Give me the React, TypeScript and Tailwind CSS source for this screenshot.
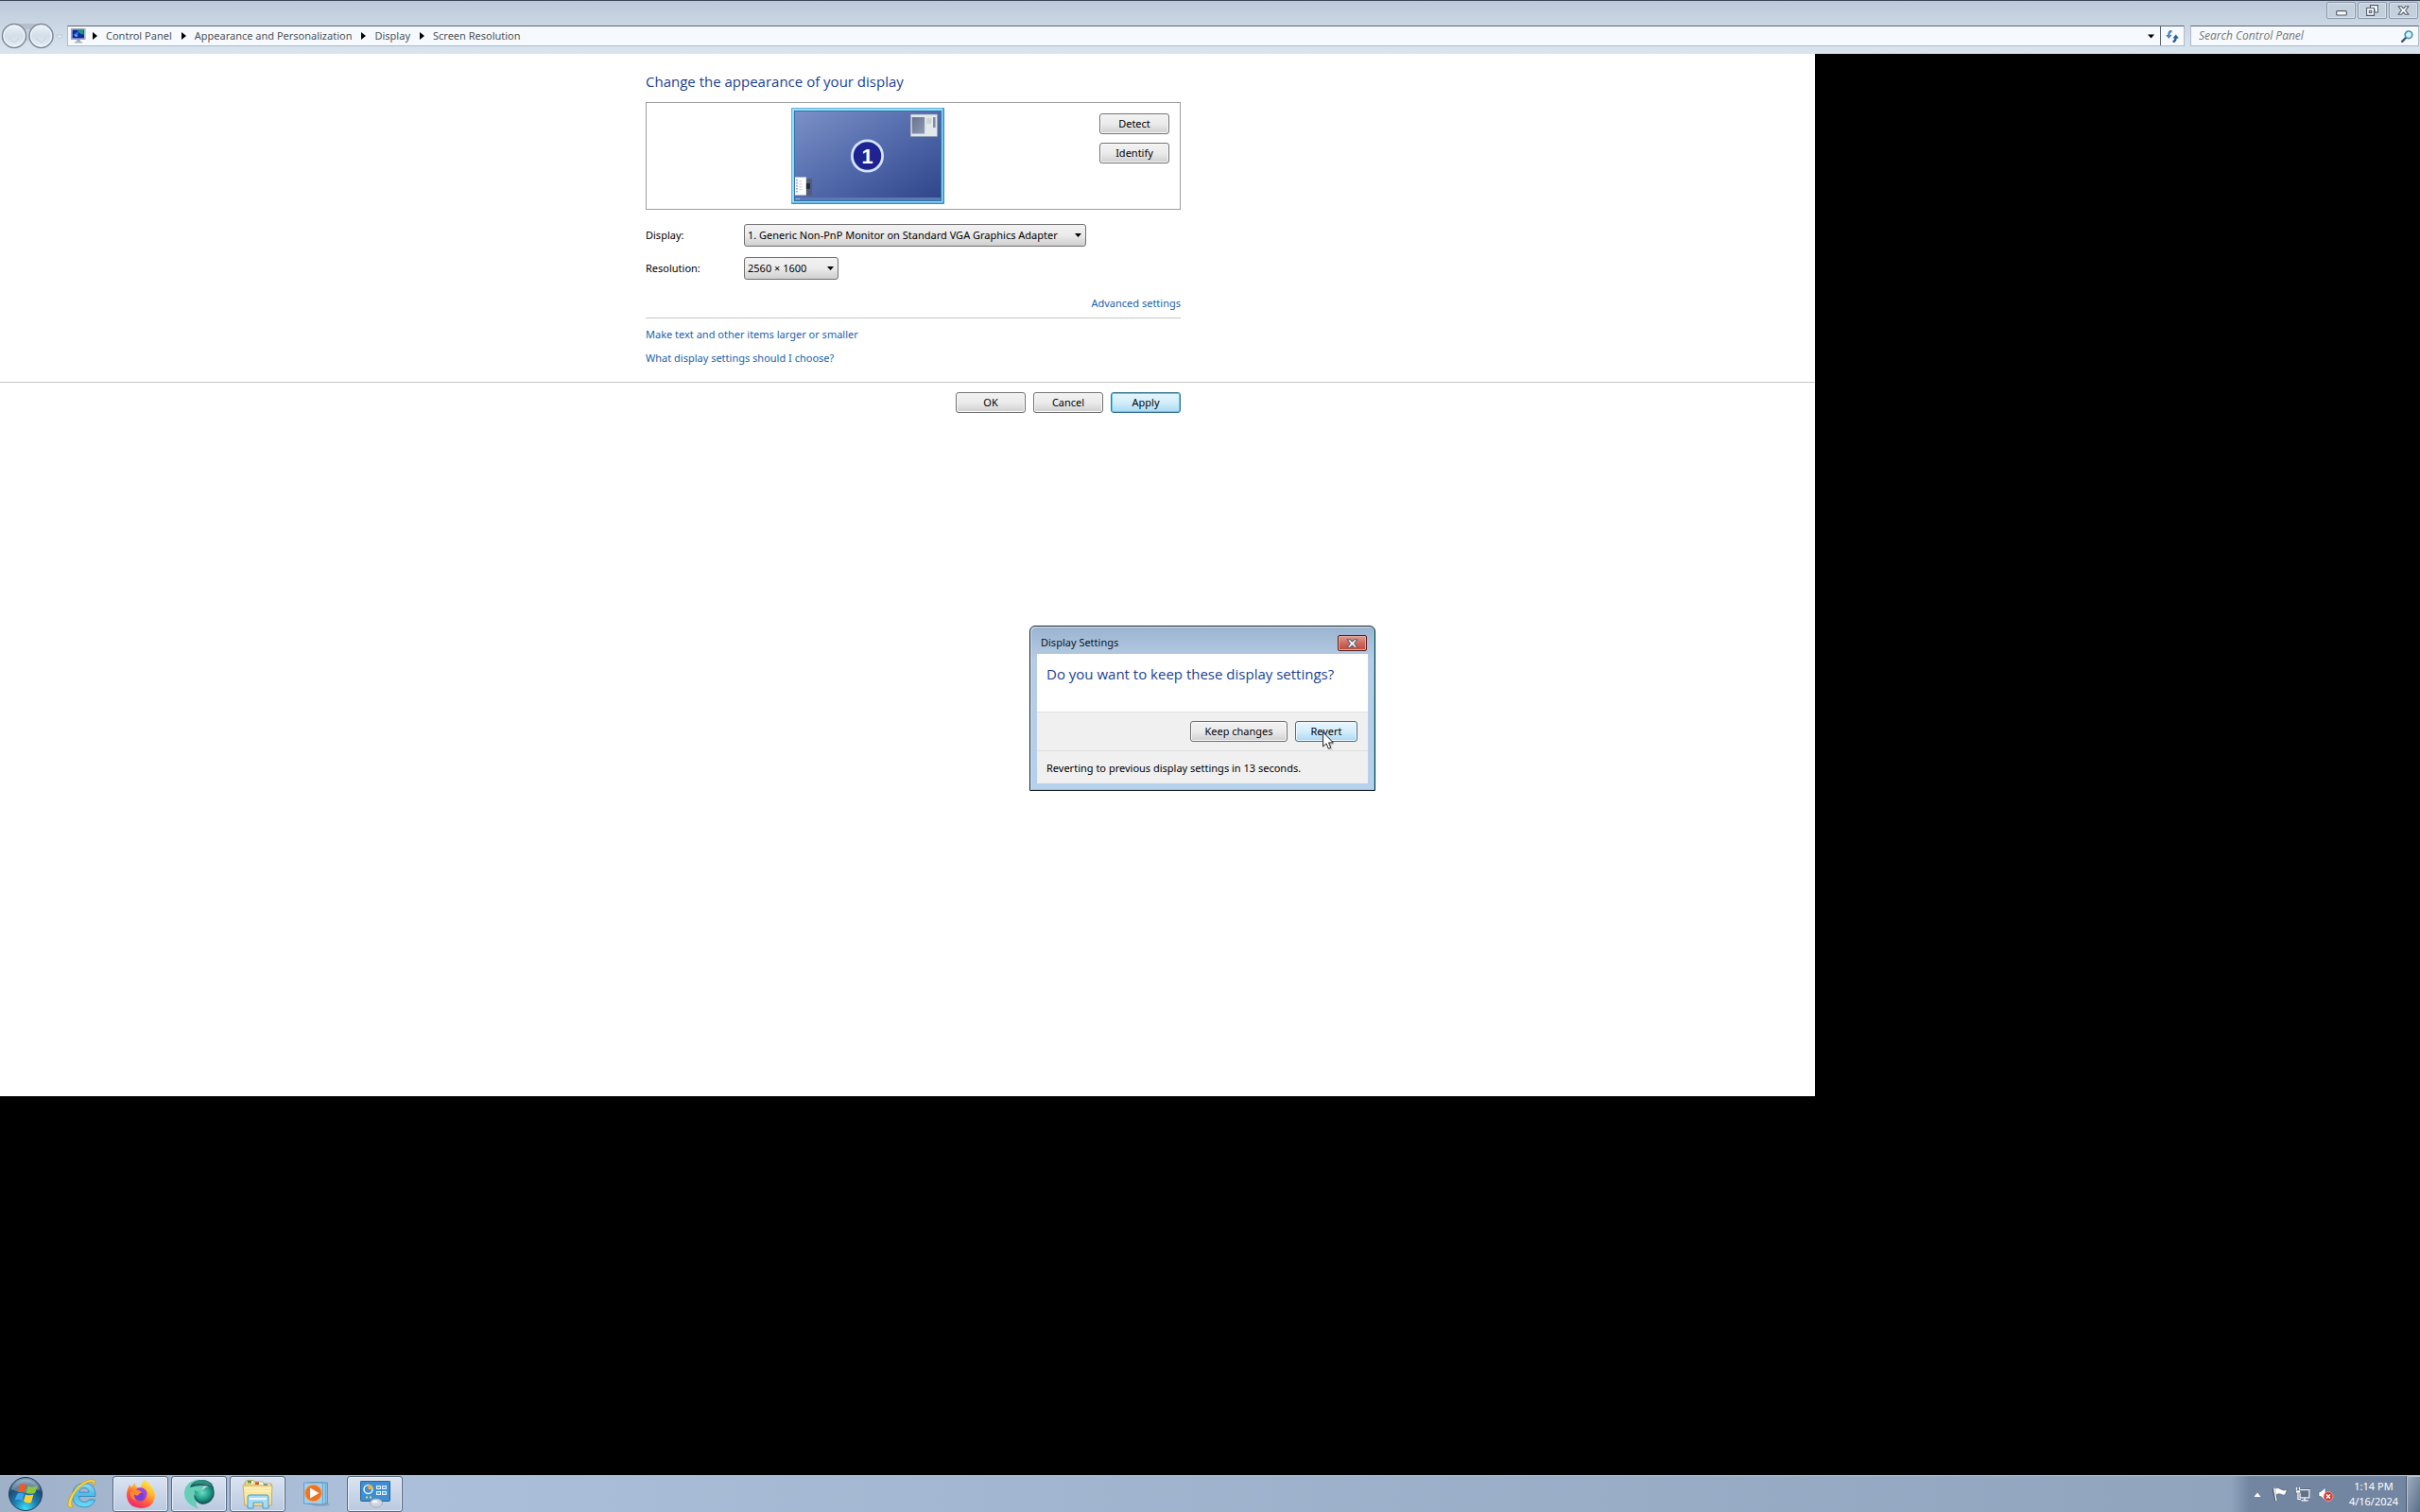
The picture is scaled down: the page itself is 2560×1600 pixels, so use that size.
import React from "react";

const buttonBase =
  "h-[22px] rounded-[3px] border text-[11px] leading-4 text-black shadow-[inset_0_0_0_1px_#fafafa]";
const buttonGrey =
  "border-[#707070] bg-linear-to-b from-[#f2f2f2] from-0% via-[#ebebeb] via-50% to-[#cfcfcf]";

function NavCircles() {
  return (
    <svg width="66" height="30" viewBox="0 0 66 30" aria-hidden="true">
      <defs>
        <linearGradient id="nav" x1="0" y1="0" x2="0" y2="1">
          <stop offset="0" stopColor="#eef3f8" />
          <stop offset="0.5" stopColor="#d3dee9" />
          <stop offset="1" stopColor="#e6eff7" />
        </linearGradient>
      </defs>
      <path d="M14 2 H43 L36 9 H22 Z" fill="#b3bfcc" />
      <path d="M24 22 Q29 18 34 22 L34 8 H24 Z" fill="#c3cfdb" />
      <circle cx="15" cy="15" r="12.5" fill="url(#nav)" stroke="#7b8794" strokeWidth="1.4" />
      <circle cx="15" cy="15" r="11" fill="none" stroke="#f6fafd" />
      <circle cx="43.500" cy="15" r="12.500" fill="url(#nav)" stroke="#7b8794" strokeWidth="1.4" />
      <circle cx="43.500" cy="15" r="11" fill="none" stroke="#f6fafd" />
      <path d="M9 17 l6 5 5 -4" fill="none" stroke="#c3ced9" />
      <path d="M38 18 l6 4 5 -5" fill="none" stroke="#c3ced9" />
      <path d="M60 14 h6 l-3 4 z" fill="#f2f7fb" stroke="#b2bfcc" strokeWidth="0.8" />
    </svg>
  );
}

function MonitorIcon() {
  return (
    <svg width="16" height="16" viewBox="0 0 16 16" aria-hidden="true">
      <rect x="0.500" y="0.500" width="14.500" height="11" fill="#c9d3dc" stroke="#9aa6b2" />
      <rect x="1.500" y="1.500" width="12.500" height="9" fill="#12259e" />
      <path d="M7 2 H13.500 V7 L9 5 Z" fill="#159a7a" />
      <path d="M2.500 7 L8 3 L7 9 Z" fill="#2b79e8" />
      <path d="M4 6 l3 2 l-2 1 z" fill="#7ee0ff" />
      <path d="M6 12 h4 v2 h2 v1.500 H4 V14 h2 z" fill="#a8b1ba" />
    </svg>
  );
}

function Crumb({ label }: { label: string }) {
  return (
    <li className="flex items-center gap-[9px]">
      <svg width="5" height="8" viewBox="0 0 5 8" aria-hidden="true">
        <path d="M0 0 L5 4 L0 8 Z" fill="#000" />
      </svg>
      <a href="#" className="text-[11px] leading-4 text-[#4d5258]">
        {label}
      </a>
    </li>
  );
}

function WindowControls() {
  const cls =
    "flex h-[18px] w-[31px] items-center justify-center rounded-[2px] border border-[#8b97a6] bg-[#c5d0dd] shadow-[inset_0_0_0_1px_#d9e2ec]";
  return (
    <div className="flex gap-[2px] pr-[2px]">
      <button className={cls} aria-label="Minimize">
        <svg width="12" height="14" viewBox="0 0 12 14">
          <rect x="0.700" y="7.700" width="10.600" height="4.300" rx="1" fill="#fff" stroke="#545d6e" strokeWidth="1.200" />
        </svg>
      </button>
      <button className={cls} aria-label="Restore">
        <svg width="13" height="12" viewBox="0 0 13 12">
          <path d="M4.500 0.600 H12.400 V8 H9 V5 H4.500 Z" fill="#fff" stroke="#545d6e" strokeWidth="1.100" />
          <path d="M0.600 3.500 H8.500 V11.400 H0.600 Z" fill="#fff" stroke="#545d6e" strokeWidth="1.100" />
          <rect x="3.300" y="6.200" width="2.600" height="2.400" fill="#c5d0dd" stroke="#545d6e" />
        </svg>
      </button>
      <button className={cls} aria-label="Close">
        <CloseGlyph />
      </button>
    </div>
  );
}

function CloseGlyph() {
  return (
    <svg width="13" height="10" viewBox="0 0 13 10" aria-hidden="true">
      <path
        d="M1 0.700 H4.200 L6.500 3 L8.800 0.700 H12 L8.600 5 L12 9.300 H8.800 L6.500 7 L4.200 9.300 H1 L4.400 5 Z"
        fill="#fff"
        stroke="#545d6e"
        strokeWidth="1.100"
        strokeLinejoin="round"
      />
    </svg>
  );
}

function Header() {
  return (
    <header className="flex h-[57px] flex-col border-t border-[#3c4557] bg-linear-to-b from-[#bdc9d9] via-[#ccd8e5] to-[#dae5ef]">
      <div className="flex h-[22px] items-start justify-end pt-[1px]">
        <WindowControls />
      </div>
      <div className="flex items-center">
        <div className="w-[71px] shrink-0">
          <NavCircles />
        </div>
        <div className="flex h-[22px] grow items-center border border-[#aebbc8] border-t-[#5b6673] bg-[#f6fafe]">
          <div className="flex grow items-center gap-[7px] pl-[3px]">
            <MonitorIcon />
            <ol className="flex items-center gap-[10px]">
              <Crumb label="Control Panel" />
              <Crumb label="Appearance and Personalization" />
              <Crumb label="Display" />
              <Crumb label="Screen Resolution" />
            </ol>
          </div>
          <button aria-label="Previous locations" className="flex h-full w-[20px] items-center justify-center">
            <svg width="7" height="5" viewBox="0 0 7 5">
              <path d="M0 0.500 H7 L3.500 4.500 Z" fill="#000" />
            </svg>
          </button>
          <button aria-label="Refresh" className="flex h-full w-[25px] items-center justify-center border-l border-[#5b6673]">
            <svg width="14" height="13" viewBox="0 0 14 13">
              <path d="M6.500 1 C4 1 3.300 2.500 3.300 6" fill="none" stroke="#4b86bd" strokeWidth="2.400" />
              <path d="M0 5 H6.600 L3.300 9 Z" fill="#4b86bd" />
              <path d="M7.500 12 C10 12 10.700 10.500 10.700 7" fill="none" stroke="#2d5f93" strokeWidth="2.400" />
              <path d="M7.400 8.500 H14 L10.700 4.500 Z" fill="#2d5f93" />
            </svg>
          </button>
        </div>
        <div className="mr-[1px] ml-[6px] flex h-[22px] w-[242px] items-center border border-[#aebbc8] border-t-[#5b6673] bg-[#f6fafe] pr-[5px] pl-[8px]">
          <input
            aria-label="Search Control Panel"
            placeholder="Search Control Panel"
            className="min-w-0 grow bg-transparent font-['Open_Sans'] text-[12px] leading-4 italic outline-none placeholder:text-[#757575]"
          />
          <svg width="13" height="13" viewBox="0 0 13 13" aria-hidden="true">
            <path d="M1.200 11.800 L5 8" stroke="#3f5673" strokeWidth="2.400" strokeLinecap="round" />
            <circle cx="8" cy="4.800" r="3.800" fill="#d8f3fb" stroke="#3f94b4" strokeWidth="1.700" />
          </svg>
        </div>
      </div>
    </header>
  );
}

function DisplayPreview() {
  return (
    <svg width="162" height="102" viewBox="0 0 163 102" preserveAspectRatio="none" role="img" aria-label="Monitor 1">
      <defs>
        <linearGradient id="desk" x1="0" y1="0" x2="1" y2="1">
          <stop offset="0" stopColor="#7c90c6" />
          <stop offset="0.450" stopColor="#566eae" />
          <stop offset="1" stopColor="#2e4689" />
        </linearGradient>
        <linearGradient id="mini" x1="0" y1="0" x2="1" y2="1">
          <stop offset="0" stopColor="#69728f" />
          <stop offset="1" stopColor="#8f9ab5" />
        </linearGradient>
      </defs>
      <rect width="163" height="102" rx="1" fill="#2f8cc4" />
      <rect x="0.500" y="0.500" width="161" height="100" fill="#9bdcf8" />
      <rect x="3" y="3" width="157" height="96" fill="#2776ae" />
      <rect x="4" y="4" width="155" height="94" fill="url(#desk)" />
      <rect x="4" y="95" width="155" height="3" fill="#5d78b4" />
      <rect x="127" y="7" width="28.500" height="23.500" fill="#e3e9ea" stroke="#8b96ab" strokeWidth="0.600" />
      <rect x="128.500" y="10" width="13.500" height="17.500" fill="url(#mini)" />
      <rect x="151" y="10" width="2.500" height="11" fill="#828b98" />
      <rect x="144" y="11" width="5" height="6" fill="#cbd5d4" />
      <rect x="4" y="73.500" width="12" height="19" fill="#fff" />
      <path d="M6 76 V90" stroke="#5c69c8" strokeWidth="1.200" strokeDasharray="1.500 1.500" />
      <path d="M10 77 V88" stroke="#d3d6ec" strokeWidth="3" strokeDasharray="1.500 1.500" />
      <rect x="16" y="75" width="6" height="18" fill="#545d78" />
      <rect x="16" y="80" width="4" height="6" fill="#222a40" />
      <path d="M5 96.500 H10" stroke="#c8d4ef" strokeDasharray="1.500 1" />
      <circle cx="81" cy="51" r="16.200" fill="#1d2391" stroke="#d3e4fb" strokeWidth="2.800" />
      <text x="81" y="59" textAnchor="middle" fontSize="22" fontWeight="700" fill="#fff" fontFamily="Liberation Sans, sans-serif">
        1
      </text>
    </svg>
  );
}

function Dropdown({ id, value, className }: { id: string; value: string; className: string }) {
  return (
    <div className={`relative ${className}`}>
      <select
        id={id}
        className="h-[24px] w-full appearance-none rounded-[3px] border border-[#707070] bg-linear-to-b from-[#f2f2f2] via-[#ebebeb] to-[#cfcfcf] pl-[3px] text-[11px] leading-4 text-black"
      >
        <option>{value}</option>
      </select>
      <svg className="pointer-events-none absolute top-[10px] right-[5px]" width="7" height="4" viewBox="0 0 7 4" aria-hidden="true">
        <path d="M0 0 H7 L3.500 4 Z" fill="#000" />
      </svg>
    </div>
  );
}

function Panel() {
  return (
    <section className="w-3/4 grow-[1103] basis-0 bg-white">
      <div className="ml-[683px] w-[566px] pt-[17px]">
        <h1 className="font-['Open_Sans'] text-[15px] leading-6 text-[#1c3f94]">Change the appearance of your display</h1>
        <div className="mt-[10px] flex h-[114px] items-start border border-[#9a9da0] pt-[5px]">
          <div className="ml-[153px] grow">
            <DisplayPreview />
          </div>
          <div className="mt-[6px] mr-[11px] flex flex-col gap-[9px]">
            <button className={`${buttonBase} ${buttonGrey} w-[74px]`}>Detect</button>
            <button className={`${buttonBase} ${buttonGrey} w-[74px]`}>Identify</button>
          </div>
        </div>
        <div className="mt-[15px] flex items-center text-[11px] leading-4">
          <label htmlFor="display" className="w-[104px]">
            Display:
          </label>
          <Dropdown id="display" value="1. Generic Non-PnP Monitor on Standard VGA Graphics Adapter" className="w-[362px]" />
        </div>
        <div className="mt-[11px] flex items-center text-[11px] leading-4">
          <label htmlFor="resolution" className="w-[104px]">
            Resolution:
          </label>
          <Dropdown id="resolution" value="2560 × 1600" className="w-[100px]" />
        </div>
        <div className="mt-[17px] flex h-[24px] justify-end border-b border-[#c4c6c8] text-[11px] leading-4">
          <a href="#" className="text-[#1762ad]">
            Advanced settings
          </a>
        </div>
        <div className="mt-[9px] flex flex-col items-start gap-[9px] pb-[17px] text-[11px] leading-4 text-[#1762ad]">
          <a href="#">Make text and other items larger or smaller</a>
          <a href="#">What display settings should I choose?</a>
        </div>
      </div>
      <div className="border-t border-[#c4c6c8] pt-[10px]">
        <div className="ml-[683px] flex w-[566px] justify-end gap-[8px]">
          <button className={`${buttonBase} ${buttonGrey} w-[74px]`}>OK</button>
          <button className={`${buttonBase} ${buttonGrey} w-[74px]`}>Cancel</button>
          <button className="h-[22px] w-[74px] rounded-[3px] border border-[#33718f] bg-linear-to-b from-[#e6f5fc] via-[#d3edf9] to-[#a5daf3] text-[11px] leading-4 text-black shadow-[inset_0_0_0_1px_#4fd0f5]">
            Apply
          </button>
        </div>
      </div>
    </section>
  );
}

function Dialog() {
  return (
    <div
      role="dialog"
      aria-labelledby="dialog-title"
      className="absolute top-[605px] left-[1089px] w-[366px] rounded-t-[6px] border border-[#15202c] bg-linear-to-b from-[#9ab3cf] from-0% via-[#b6cce4] via-20% to-[#b5d1ec] px-[7px] pb-[7px] shadow-[inset_1px_1px_0_#d5e6f5,inset_-1px_-1px_0_#68d9f0]"
    >
      <div className="flex h-[29px] items-start justify-between pt-[9px] pl-[4px]">
        <h2 id="dialog-title" className="text-[11px] leading-4 text-[#0a1420]">
          Display Settings
        </h2>
        <button
          aria-label="Close"
          className="mr-[1px] flex h-[17px] w-[31px] items-center justify-center rounded-[2px] border border-[#5a1c1c] bg-linear-to-b from-[#df9d92] from-0% via-[#cf6f62] via-45% to-[#c0463a] shadow-[inset_0_0_0_1px_#e4aaa0]"
        >
          <CloseGlyph />
        </button>
      </div>
      <div className="bg-[#f0f0f0]">
        <div className="h-[61px] bg-white pt-[9px] pl-[10px]">
          <p className="font-['Open_Sans'] text-[15px] leading-6 text-[#1c3f94]">Do you want to keep these display settings?</p>
        </div>
        <div className="flex h-[42px] items-start justify-end gap-[8px] border-t border-b border-t-[#dfdfdf] border-b-[#dfdfdf] pt-[9px] pr-[11px]">
          <button className={`${buttonBase} ${buttonGrey} w-[103px]`}>Keep changes</button>
          <button className="relative h-[22px] w-[66px] rounded-[3px] border border-[#4a6e8c] bg-linear-to-b from-[#e9f6fd] via-[#d5edfb] to-[#a9d9f3] text-[11px] leading-4 text-black shadow-[inset_0_0_0_1px_#eefaff]">
            Revert
            <svg className="absolute top-[10px] left-[28px]" width="14" height="21" viewBox="0 0 14 21" aria-hidden="true">
              <path d="M2 2 L13 13 L9 15 L11 20 L7 19 Z" fill="#000" opacity="0.150" />
              <path
                d="M0.600 0.800 V16 L4 12.800 L6.300 18.200 L8.800 17.100 L6.500 11.900 H11.300 Z"
                fill="#fff"
                stroke="#222"
                strokeWidth="1"
                strokeLinejoin="round"
              />
            </svg>
          </button>
        </div>
        <p className="pt-[10px] pb-[8px] pl-[10px] text-[11px] leading-4 text-black">
          Reverting to previous display settings in 13 seconds.
        </p>
      </div>
    </div>
  );
}

function StartOrb() {
  return (
    <svg width="38" height="38" viewBox="0 0 38 38" aria-hidden="true">
      <defs>
        <radialGradient id="orb" cx="0.500" cy="0.950" r="0.900">
          <stop offset="0" stopColor="#3fe0f7" />
          <stop offset="0.400" stopColor="#1b7fb4" />
          <stop offset="0.750" stopColor="#1e4c74" />
          <stop offset="1" stopColor="#7d9cb6" />
        </radialGradient>
      </defs>
      <circle cx="19" cy="19" r="17.500" fill="url(#orb)" stroke="#223b57" />
      <path d="M4 14 A16 16 0 0 1 34 14 Q19 21 4 14" fill="#fff" opacity="0.280" />
      <path d="M13 9 Q16 7.500 20 9.500 L18 17 Q14.500 15.300 11 16.800 Z" fill="#ee5a24" />
      <path d="M21.500 10.200 Q25 12.500 31.500 10.500 L29 18 Q24 19.500 19.500 17.700 Z" fill="#8cc63e" />
      <path d="M10.500 18.500 Q14 17 17.500 18.700 L15.500 25.500 Q12 24 7.500 25.500 Z" fill="#3fa4e8" />
      <path d="M19 19.400 Q23 21.200 27.500 19.600 L25 28 Q20.500 29.500 17 26.500 Z" fill="#fbd034" />
    </svg>
  );
}

function ExplorerE() {
  return (
    <svg width="34" height="34" viewBox="0 0 34 34" aria-hidden="true">
      <defs>
        <linearGradient id="ie" x1="0" y1="0" x2="0" y2="1">
          <stop offset="0" stopColor="#8fdcf8" />
          <stop offset="0.500" stopColor="#4dbbe9" />
          <stop offset="1" stopColor="#6fdcf5" />
        </linearGradient>
      </defs>
      <path
        d="M31 19.500 H13.500 Q14 25.500 19.500 25.500 Q22.500 25.500 24 23 H30.500 Q28 31 19 31 Q7 30.500 6.500 18.500 Q7 6 19 5.500 Q31.500 6 31 19.500 Z M13.800 15.200 H24.200 Q23.500 10.500 19 10.500 Q14.500 10.500 13.800 15.200 Z"
        fill="url(#ie)"
        stroke="#2a83b8"
        strokeWidth="0.800"
        fillRule="evenodd"
      />
      <path
        d="M29 9 Q32.500 3 28.500 1.800 Q23 0.500 14 7.500 Q3 17.500 2 27 Q1.500 33 8 30 Q4.500 29.500 6 24 Q8.500 15 16 9 Q23 3.500 27.500 4.200 Q29.500 5 29 9 Z"
        fill="#f8d648"
        stroke="#c49a18"
        strokeWidth="0.700"
      />
    </svg>
  );
}

function Firefox() {
  return (
    <svg width="32" height="32" viewBox="0 0 32 32" aria-hidden="true">
      <defs>
        <linearGradient id="ff" x1="0.800" y1="0" x2="0.200" y2="1">
          <stop offset="0" stopColor="#fff04a" />
          <stop offset="0.350" stopColor="#ffb52e" />
          <stop offset="0.650" stopColor="#ff5a3c" />
          <stop offset="1" stopColor="#e8207a" />
        </linearGradient>
      </defs>
      <path
        d="M20 1 Q25 4 27 8 Q31 13 31 18 Q29.500 31 16 31 Q2 30 1 17.500 Q1 11 4.500 6 Q5 8 6 9 Q8 5.500 10 4.500 Q10 8 12.500 9 L16 9 Q17 4 20 1 Z"
        fill="url(#ff)"
      />
      <circle cx="15.500" cy="17" r="6.500" fill="#7a3ddb" />
      <path d="M13 9.500 Q20 8 22.500 14 Q23 20 18 21.500 Q20.500 17 17.500 14.500 Q12 14.500 10 12 Z" fill="#9a45e0" />
      <path d="M5 14 Q9 10.500 14 12 Q16.500 13 17 14.500 Q14 15 13 17.500 Q10 18 9 16 Q7.500 20 11.500 23 Q4.500 22 5 14 Z" fill="#ff8a2a" />
    </svg>
  );
}

function GreenOrb() {
  return (
    <svg width="34" height="34" viewBox="0 0 34 34" aria-hidden="true">
      <defs>
        <radialGradient id="gr" cx="0.400" cy="0.400" r="0.700">
          <stop offset="0" stopColor="#6fdcc6" />
          <stop offset="0.600" stopColor="#1f9c87" />
          <stop offset="1" stopColor="#0c5a57" />
        </radialGradient>
      </defs>
      <path d="M16 1.500 Q1 4 1 17 Q2 28 16 32.500 Q12 28 14 24 L22 8 Z" fill="#66cdb6" />
      <path d="M12 4 Q22 -1 30 6 Q34 12 32 20 Q28 28 20 28 Q12 26 11 18 Q14 20 16 18 L30 10 Q20 6 7 10 Q8 6 12 4 Z" fill="#1a5c5c" />
      <path d="M9 7 Q16 0 25 3 Q29 6 31 9 Q20 5 9 7 Z" fill="#2f8a80" />
      <path d="M12 13 Q17 16 21 12 Q26 7 31 10 Q33 16 29 22 Q24 27 17 25 Q11 21 12 13 Z" fill="url(#gr)" />
    </svg>
  );
}

function Folder() {
  return (
    <svg width="34" height="32" viewBox="0 0 34 32" aria-hidden="true">
      <path d="M3 4 L5 1.500 H12 L13 3 H22 L23 5 H31 V28 H3 Z" fill="#f0d688" stroke="#b69546" strokeWidth="0.800" />
      <rect x="6" y="2" width="4" height="2.500" fill="#4aa54a" />
      <rect x="14" y="3.500" width="4" height="2.500" fill="#c8583a" />
      <rect x="23" y="5.500" width="4" height="2.500" fill="#4a7ac8" />
      <path d="M10 2 H12 V5 H10 Z M18 3.500 H22 V6 H18 Z M27 5.500 H30 V8 H27 Z" fill="#fff" />
      <path d="M1 7 H32 L31 28 H3 Z" fill="#f9e7a2" stroke="#c2a252" strokeWidth="0.800" />
      <path d="M2 10 H31 M3 13 H31" stroke="#fff4c4" />
      <path d="M6 31 V19 Q6 17 8 17 H26 Q28 17 28 19 V31 H22 V25 H12 V31 Z" fill="#a5dcf5" stroke="#4b98c6" />
      <path d="M8 21 H26" stroke="#e6f7ff" strokeWidth="2" />
    </svg>
  );
}

function MediaPlayer() {
  return (
    <svg width="30" height="28" viewBox="0 0 30 28" aria-hidden="true">
      <ellipse cx="19" cy="25" rx="10" ry="2" fill="#8595ab" opacity="0.600" />
      <path d="M8 2 H26.500 V24 H8 Z" fill="#86c1e6" stroke="#4f92c0" strokeWidth="0.800" />
      <path d="M5 2 H24 V24.500 H5 Z" fill="#a9d7f2" stroke="#4f92c0" strokeWidth="0.800" />
      <path d="M1.500 2 H21.500 V25 L1.500 24 Z" fill="#9dd0ef" stroke="#4f92c0" strokeWidth="0.800" />
      <circle cx="11.500" cy="13" r="9" fill="#ec7424" stroke="#f8b070" />
      <path d="M8 7.500 L17.500 13 L8 18.500 Z" fill="#fff" />
    </svg>
  );
}

function ControlPanelIcon() {
  return (
    <svg width="32" height="30" viewBox="0 0 32 30" aria-hidden="true">
      <rect x="0.500" y="1.500" width="31" height="21" rx="1" fill="#3d8fd1" stroke="#2a6199" />
      <path d="M0.500 1.500 H31.500" stroke="#44607e" />
      <circle cx="8.500" cy="10" r="4.500" fill="none" stroke="#d7efff" strokeWidth="1.600" />
      <path d="M8.500 10 V4.500 A5.500 5.500 0 0 1 13.500 10 Z" fill="#f6b13c" />
      <g fill="#5aa9e2" stroke="#e3f4ff" strokeWidth="1">
        <rect x="17.500" y="6.500" width="4" height="3" />
        <rect x="23.500" y="6.500" width="4" height="3" />
        <rect x="17.500" y="12.500" width="4" height="3" />
        <rect x="23.500" y="12.500" width="4" height="3" />
      </g>
      <path d="M6 18.500 H8 M10 18.500 H12" stroke="#f6d36c" strokeWidth="2" />
      <ellipse cx="17" cy="24.500" rx="6.500" ry="4.500" fill="#cfd6dc" stroke="#97a2ad" strokeWidth="0.800" />
      <ellipse cx="15.500" cy="23" rx="3" ry="1.500" fill="#f4f7f9" />
    </svg>
  );
}

const running =
  "flex h-[38px] w-[59px] items-center justify-center rounded-[3px] border border-[#59697f] bg-linear-to-b from-[#dbe4f1] to-[#b9c9e0] shadow-[inset_0_0_0_1px_#e6eef8]";

function Taskbar() {
  return (
    <footer className="flex h-[39px] items-center border-t border-[#c3cfde] bg-linear-to-r from-[#9fb1c9] from-0% via-[#adc0db] via-15% to-[#8ea1bb]">
      <nav className="flex grow items-center" aria-label="Taskbar">
        <button aria-label="Start" className="flex w-[54px] justify-center">
          <StartOrb />
        </button>
        <button aria-label="Internet Explorer" className="flex w-[65px] justify-center">
          <ExplorerE />
        </button>
        <div className="flex items-center gap-[3px]">
          <button aria-label="Firefox" className={running}>
            <Firefox />
          </button>
          <button aria-label="Browser" className={running}>
            <GreenOrb />
          </button>
          <button aria-label="File Explorer" className={running}>
            <Folder />
          </button>
          <button aria-label="Media Player" className="flex w-[59px] justify-center">
            <MediaPlayer />
          </button>
          <button aria-label="Control Panel" className={running}>
            <ControlPanelIcon />
          </button>
        </div>
      </nav>
      <div className="flex h-full items-center bg-linear-to-r from-transparent to-[#7286a1] to-10% pl-[24px]">
        <button aria-label="Show hidden icons" className="flex w-[20px]">
          <svg width="8" height="5" viewBox="0 0 8 5">
            <path d="M0.500 5 L4 0.500 L7.500 5 Z" fill="#fff" />
          </svg>
        </button>
        <div className="mr-[8px] flex items-center gap-[8px]">
          <svg width="16" height="16" viewBox="0 0 16 16" aria-label="Action Center" role="img">
            <path d="M1 1.500 L4 15" stroke="#33435a" strokeWidth="3" />
            <path d="M2.500 2 Q6 0.500 9 3 Q12 5 15.500 3 L13.500 8.500 Q11 10 8.500 8 Q6 7 3.500 9 Z" fill="#fff" stroke="#4a5a70" strokeWidth="0.600" />
            <path d="M1.500 1.500 L4 15" stroke="#fff" strokeWidth="1.500" />
          </svg>
          <svg width="16" height="16" viewBox="0 0 16 16" aria-label="Network" role="img">
            <rect x="5" y="3.500" width="10" height="8.500" fill="#5f7188" stroke="#33435a" strokeWidth="2.600" />
            <rect x="5" y="3.500" width="10" height="8.500" fill="#5f7188" stroke="#fff" strokeWidth="1.300" />
            <path d="M10 12 V14.500 M6.500 14.800 H13.500" stroke="#fff" strokeWidth="1.300" />
            <path d="M1.500 1 V4 M4.500 1 V4" stroke="#fff" strokeWidth="1.200" />
            <path d="M0.500 4 H5.500 V7 H0.500 Z" fill="#fff" stroke="#33435a" strokeWidth="0.500" />
            <path d="M3 7 V13.500 H6" fill="none" stroke="#fff" strokeWidth="1.200" />
          </svg>
          <svg width="17" height="16" viewBox="0 0 17 16" aria-label="Volume" role="img">
            <path d="M1 5.500 H3 L8 1 V15 L3 10.500 H1 Z" fill="#fff" stroke="#4a5a70" strokeWidth="0.600" />
            <circle cx="11" cy="10.500" r="5" fill="#d23b35" stroke="#f0b8b5" strokeWidth="0.700" />
            <path d="M9 8.500 L13 12.500 M13 8.500 L9 12.500" stroke="#fff" strokeWidth="1.600" />
          </svg>
        </div>
        <time className="w-[68px] text-center text-[11px] leading-4 text-white">
          1:14 PM
          <br />
          4/16/2024
        </time>
        <button
          aria-label="Show desktop"
          className="h-full w-[15px] border-l border-[#46566b] bg-linear-to-br from-[#a0aec0] to-[#5b6f8a] shadow-[inset_1px_1px_0_#b9c5d3]"
        />
      </div>
    </footer>
  );
}

export default function App() {
  return (
    <div className="flex min-h-screen flex-col bg-black font-['Noto_Sans','Open_Sans',sans-serif]">
      <Header />
      <main className="relative flex grow flex-col">
        <Panel />
        <div className="grow-[401] basis-0" />
        <Dialog />
      </main>
      <Taskbar />
    </div>
  );
}
